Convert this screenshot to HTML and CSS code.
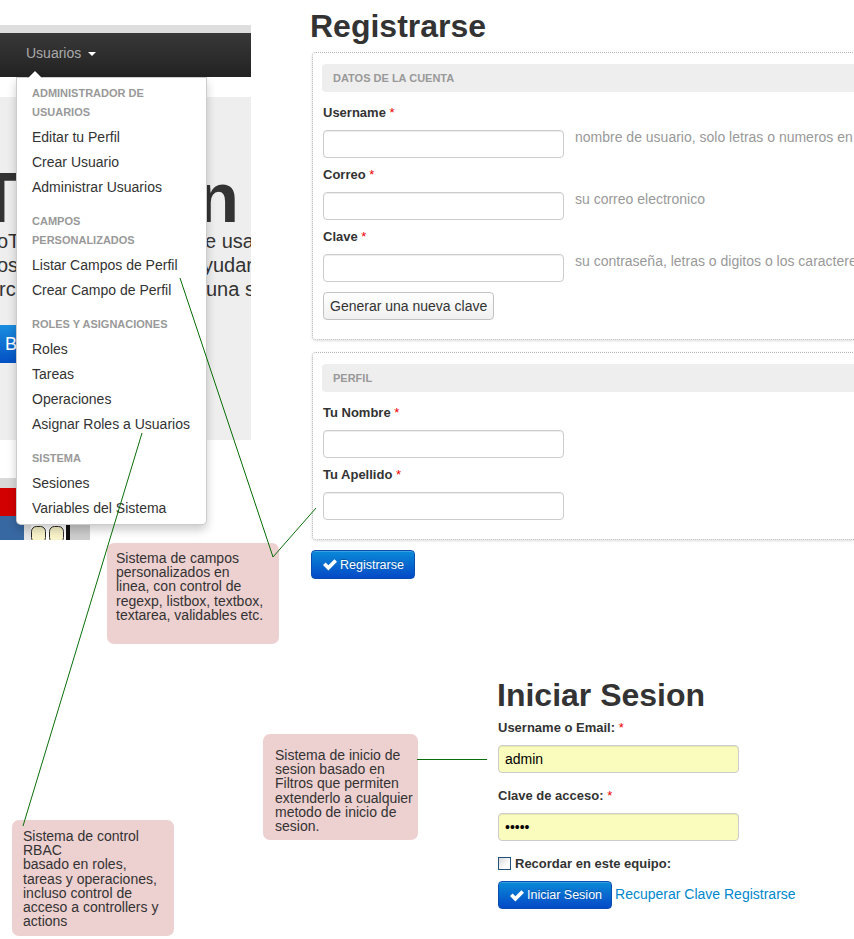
FILE: index.html
```html
<!DOCTYPE html>
<html lang="es">
<head>
<meta charset="utf-8">
<title>Registrarse / Iniciar Sesion</title>
<link rel="stylesheet" href="styles.css">
</head>
<body>
<div class="canvas">

  <section class="shot">
    <div class="shot-band"></div>
    <nav class="navbar">
      <span class="nav-link">Usuarios<span class="caret"></span></span>
    </nav>
    <div class="hero">
      <h1 class="hero-title"><span class="ht-left">T</span><span>n</span></h1>
      <div class="hero-row"><span class="hl hl-a">oT</span><span class="hr">e usa</span></div>
      <div class="hero-row"><span class="hl hl-b">os</span><span class="hr">yudar</span></div>
      <div class="hero-row"><span class="hl hl-c">rc</span><span class="hr">una s</span></div>
      <div class="hero-btn">B</div>
    </div>
    <svg class="shot-pic" width="251" height="62" viewBox="0 0 251 62">
      <rect x="0" y="0" width="16" height="10" fill="#d9d9d9"/>
      <rect x="0" y="10" width="16" height="28" fill="#d30000"/>
      <rect x="0" y="38" width="24" height="24" fill="#3868a2"/>
      <rect x="24" y="47" width="7" height="15" fill="#e6e6e6"/>
      <rect x="31.5" y="48.5" width="14" height="16" rx="5" fill="#f8f3c8" stroke="#2a2a2a"/>
      <rect x="49.5" y="48.5" width="14" height="16" rx="5" fill="#f8f3c8" stroke="#2a2a2a"/>
      <rect x="66" y="47" width="4" height="15" fill="#111"/>
      <rect x="70" y="47" width="20" height="15" fill="#cdcdcd"/>
    </svg>

    <div class="dropdown">
      <div class="dd-header">Administrador de<br>Usuarios</div>
      <div class="dd-item">Editar tu Perfil</div>
      <div class="dd-item">Crear Usuario</div>
      <div class="dd-item">Administrar Usuarios</div>
      <div class="dd-divider"></div>
      <div class="dd-header">Campos<br>Personalizados</div>
      <div class="dd-item">Listar Campos de Perfil</div>
      <div class="dd-item">Crear Campo de Perfil</div>
      <div class="dd-divider"></div>
      <div class="dd-header">Roles y Asignaciones</div>
      <div class="dd-item">Roles</div>
      <div class="dd-item">Tareas</div>
      <div class="dd-item">Operaciones</div>
      <div class="dd-item">Asignar Roles a Usuarios</div>
      <div class="dd-divider"></div>
      <div class="dd-header">Sistema</div>
      <div class="dd-item">Sesiones</div>
      <div class="dd-item">Variables del Sistema</div>
    </div>
  </section>

  <section class="register">
    <h1 class="page-title">Registrarse</h1>
    <fieldset class="fieldset">
      <div class="legend">DATOS DE LA CUENTA</div>
      <div class="field">
        <label class="lbl">Username <span class="req">*</span></label>
        <div class="control"><input class="inp" type="text"><span class="hint">nombre de usuario, solo letras o numeros en minusculas</span></div>
      </div>
      <div class="field">
        <label class="lbl">Correo <span class="req">*</span></label>
        <div class="control"><input class="inp" type="text"><span class="hint">su correo electronico</span></div>
      </div>
      <div class="field">
        <label class="lbl">Clave <span class="req">*</span></label>
        <div class="control"><input class="inp" type="password"><span class="hint">su contraseña, letras o digitos o los caracteres especiales</span></div>
      </div>
      <button class="btn-plain" type="button">Generar una nueva clave</button>
    </fieldset>
    <fieldset class="fieldset fieldset-2">
      <div class="legend">PERFIL</div>
      <div class="field">
        <label class="lbl">Tu Nombre <span class="req">*</span></label>
        <div class="control"><input class="inp" type="text"></div>
      </div>
      <div class="field">
        <label class="lbl">Tu Apellido <span class="req">*</span></label>
        <div class="control"><input class="inp" type="text"></div>
      </div>
    </fieldset>
    <button class="btn-primary btn-reg" type="button">
      <svg class="ok" width="14" height="13" viewBox="0 0 14 13"><polygon points="0,7 2.6,4.4 5.4,7.2 11.4,1.2 14,3.8 5.4,12.4" fill="#fff"/></svg>Registrarse
    </button>
  </section>

  <section class="login">
    <h1 class="page-title login-title">Iniciar Sesion</h1>
    <label class="lbl login-l1">Username o Email: <span class="req">*</span></label>
    <input class="inp inp-auto" type="text" value="admin">
    <label class="lbl login-l2">Clave de acceso: <span class="req">*</span></label>
    <input class="inp inp-auto" type="password" value="admin">
    <div class="remember"><span class="check"></span><span class="lbl-inline">Recordar en este equipo:</span></div>
    <div class="login-actions">
      <button class="btn-primary btn-login" type="button">
        <svg class="ok" width="14" height="13" viewBox="0 0 14 13"><polygon points="0,7 2.6,4.4 5.4,7.2 11.4,1.2 14,3.8 5.4,12.4" fill="#fff"/></svg>Iniciar Sesion
      </button>
      <span class="links"><a class="lnk">Recuperar Clave</a> <a class="lnk">Registrarse</a></span>
    </div>
  </section>

  <div class="note note-1">Sistema de campos<br>personalizados en<br>linea, con control de<br>regexp, listbox, textbox,<br>textarea, validables etc.</div>
  <div class="note note-2">Sistema de inicio de<br>sesion basado en<br>Filtros que permiten<br>extenderlo a cualquier<br>metodo de inicio de<br>sesion.</div>
  <div class="note note-3">Sistema de control<br>RBAC<br>basado en roles,<br>tareas y operaciones,<br>incluso control de<br>acceso a controllers y<br>actions</div>

  <svg class="wires" width="854" height="939" viewBox="0 0 854 939">
    <polyline points="180,278 273,557 316,508"/>
    <line x1="142" y1="433" x2="23" y2="826"/>
    <line x1="417" y1="759.5" x2="487" y2="759.5"/>
  </svg>
</div>
</body>
</html>
```

FILE: styles.css
```css
* { box-sizing: border-box; }
html, body { margin: 0; padding: 0; }
body {
  width: 854px;
  height: 939px;
  overflow: hidden;
  background: #fff;
  font-family: "Liberation Sans", Arial, sans-serif;
  color: #333;
}
.canvas { position: relative; width: 854px; height: 939px; overflow: hidden; }

/* left screenshot fragment */
.shot {
  position: absolute;
  left: 0;
  top: 25px;
  width: 251px;
  display: flex;
  flex-direction: column;
}
.shot-band { height: 8px; background: #dedede; }
.navbar {
  height: 44px;
  background: linear-gradient(#383838, #222);
  display: flex;
  align-items: flex-start;
}
.nav-link {
  padding-left: 26px;
  height: 40px;
  font-size: 14px;
  color: #aaa;
  display: flex;
  align-items: center;
  gap: 7px;
}
.caret {
  width: 0;
  height: 0;
  border-left: 4px solid transparent;
  border-right: 4px solid transparent;
  border-top: 4px solid #fff;
  margin-top: 1px;
}
.hero {
  height: 343px;
  margin-top: 20px;
  background: #eee;
  padding-top: 70px;
  overflow: hidden;
}
.hero-title {
  margin: 0;
  display: flex;
  justify-content: space-between;
  font-size: 70px;
  line-height: 62px;
  font-weight: bold;
  color: #333;
  padding-right: 12px;
}
.ht-left { margin-left: -22px; }
.hero-row {
  display: flex;
  white-space: nowrap;
  font-size: 20px;
  line-height: 24px;
  color: #333;
}
.hl { overflow: hidden; flex: none; }
.hl-a { width: 205px; text-indent: -3px; }
.hl-b { width: 203px; text-indent: -3px; }
.hl-c { width: 206px; text-indent: -1px; }
.hero-btn {
  margin-top: 24px;
  margin-left: -12px;
  width: 150px;
  height: 38px;
  line-height: 38px;
  padding-left: 17px;
  font-size: 18px;
  color: #fff;
  background: linear-gradient(#1a8ee0, #0450c4);
  border-radius: 6px;
}
.shot-pic { display: block; margin-top: 38px; }

.dropdown {
  position: absolute;
  left: 16px;
  top: 52px;
  width: 191px;
  background: #fff;
  border: 1px solid rgba(0, 0, 0, 0.2);
  border-radius: 0 0 5px 5px;
  box-shadow: 0 5px 10px rgba(0, 0, 0, 0.2);
  padding: 3px 15px;
  z-index: 2;
}
.dropdown::before {
  content: "";
  position: absolute;
  top: -8px;
  left: 10px;
  border-left: 8px solid transparent;
  border-right: 8px solid transparent;
  border-bottom: 8px solid rgba(0, 0, 0, 0.2);
}
.dropdown::after {
  content: "";
  position: absolute;
  top: -7px;
  left: 11px;
  border-left: 7px solid transparent;
  border-right: 7px solid transparent;
  border-bottom: 7px solid #fff;
}
.dd-header {
  font-size: 11px;
  font-weight: bold;
  color: #999;
  text-transform: uppercase;
  line-height: 19px;
  padding: 3px 0;
  white-space: nowrap;
}
.dd-item {
  font-size: 14px;
  line-height: 25px;
  color: #333;
  white-space: nowrap;
}
.dd-divider { height: 9px; }

/* registration form */
.register {
  position: absolute;
  left: 312px;
  top: 0;
  width: 600px;
}
.page-title {
  margin: 8px 0 0 -2px;
  font-size: 32px;
  line-height: 36px;
  font-weight: bold;
  color: #333;
}
.fieldset {
  margin: 8px 0 0;
  min-width: 0;
  border: 1px dotted #b3b3b3;
  border-radius: 4px;
  padding: 11px 0 19px 10px;
  box-shadow: 0 1px 3px rgba(0, 0, 0, 0.13);
}
.fieldset-2 { margin-top: 12px; }
.legend {
  margin-left: -1px;
  height: 28px;
  line-height: 28px;
  background: #eee;
  border-radius: 4px;
  padding-left: 11px;
  font-size: 11px;
  font-weight: bold;
  color: #999;
}
.field { margin-top: 7px; }
.legend + .field { margin-top: 11px; }
.lbl {
  display: block;
  font-size: 13px;
  line-height: 20px;
  font-weight: bold;
  color: #333;
  margin-bottom: 7px;
}
.req { color: #e00; font-weight: normal; }
.control {
  display: flex;
  align-items: flex-start;
  gap: 11px;
}
.inp {
  display: block;
  width: 241px;
  height: 28px;
  margin: 0;
  border: 1px solid #ccc;
  border-radius: 4px;
  box-shadow: inset 0 1px 1px rgba(0, 0, 0, 0.075);
  padding: 0 6px;
  font: 14px "Liberation Sans", Arial, sans-serif;
  color: #000;
  background: #fff;
  flex: none;
}
.hint {
  font-size: 14px;
  line-height: 14px;
  color: #999;
  white-space: nowrap;
}
.btn-plain {
  display: block;
  margin-top: 10px;
  height: 28px;
  padding: 0 6px;
  border: 1px solid #c2c2c2;
  border-radius: 4px;
  background: linear-gradient(#fff, #f0f0f0);
  font: 14px "Liberation Sans", Arial, sans-serif;
  color: #333;
}
.btn-primary {
  display: flex;
  align-items: center;
  gap: 3px;
  height: 28px;
  padding: 0 10px 0 11px;
  border: 1px solid #0a4fb0;
  border-radius: 4px;
  background: linear-gradient(#0a8ad8, #0449c6);
  font: 12.5px "Liberation Sans", Arial, sans-serif;
  color: #fff;
  text-shadow: 0 -1px 0 rgba(0, 0, 0, 0.25);
  box-shadow: inset 0 1px 0 rgba(255, 255, 255, 0.2);
}
.ok { flex: none; }
.btn-reg { margin: 10px 0 0 -1px; height: 29px; }
.btn-login { padding: 0 9px 0 11px; }

/* login */
.login {
  position: absolute;
  left: 498px;
  top: 669px;
  width: 340px;
}
.login-title { margin-left: -1px; }
.login-l1 { margin-top: 5px; }
.login-l2 { margin-top: 13px; }
.inp-auto { background: #f9fcbd; }
.remember {
  margin-top: 12px;
  height: 20px;
  display: flex;
  align-items: center;
  gap: 4px;
}
.check {
  width: 13px;
  height: 13px;
  border: 1px solid #24507e;
  background: linear-gradient(135deg, #d8d8d8, #fff 70%);
}
.lbl-inline {
  font-size: 13px;
  font-weight: bold;
  color: #333;
}
.login-actions {
  margin-top: 8px;
  display: flex;
  align-items: center;
  gap: 3px;
}
.links { font-size: 14px; margin-top: -3px; }
.lnk { color: #0088cc; text-decoration: none; }

/* annotations */
.note {
  position: absolute;
  background: #edd0d0;
  border-radius: 7px;
  font-size: 14px;
  line-height: 14.2px;
  color: #333;
  white-space: nowrap;
}
.note-1 { left: 107px; top: 543px; width: 172px; height: 101px; padding: 8px 0 0 9px; }
.note-2 { left: 263px; top: 734px; width: 155px; height: 106px; padding: 14px 0 0 12px; }
.note-3 { left: 12px; top: 820px; width: 162px; height: 116px; padding: 9px 0 0 11px; }

.wires {
  position: absolute;
  left: 0;
  top: 0;
  z-index: 5;
  pointer-events: none;
  fill: none;
  stroke: #0a6e0a;
  stroke-width: 1;
}
```
